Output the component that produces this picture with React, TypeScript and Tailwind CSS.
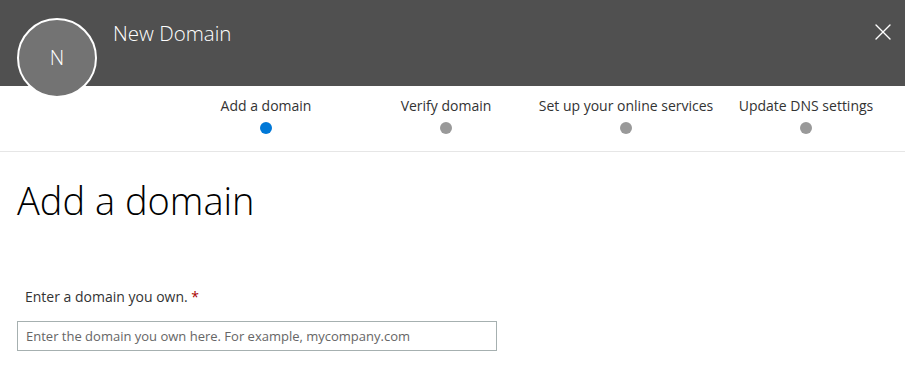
import { X } from "lucide-react";

const steps = [
  "Add a domain",
  "Verify domain",
  "Set up your online services",
  "Update DNS settings",
];

export default function App() {
  return (
    <div className="w-[905px] h-[365px] bg-white overflow-hidden font-['Open_Sans','Noto_Sans',sans-serif]">
      <div className="relative h-[86px] bg-[#505050] flex items-start">
        <div className="ml-[17px] mt-[18px] w-[80px] h-[80px] shrink-0 rounded-full bg-[#737373] border-2 border-white flex items-center justify-center text-white text-[20px] font-light z-10">
          N
        </div>
        <h1 className="ml-[16px] mt-[18px] text-white text-[20.5px] font-light">New Domain</h1>
        <button className="absolute right-[8px] top-[18px] text-white">
          <X className="w-[28px] h-[28px]" strokeWidth={1.2} />
        </button>
      </div>
      <div className="h-[66px] border-b border-[#e6e6e6] flex justify-end pr-[9px]">
        {steps.map((s, i) => (
          <div key={s} className="w-[180px] flex flex-col items-center pt-[10px]">
            <span className="text-[14px] text-[#333] whitespace-nowrap leading-[20px]">{s}</span>
            <span
              className={`mt-[6px] w-[12px] h-[12px] rounded-full ${
                i === 0 ? "bg-[#0078d7]" : "bg-[#999]"
              }`}
            />
          </div>
        ))}
      </div>
      <div className="px-[17px]">
        <h2 className="mt-[24px] text-[38px] font-light text-black leading-[48px]">Add a domain</h2>
        <label className="block mt-[62px] ml-[8px] text-[14px] text-[#333]">
          Enter a domain you own. <span className="text-[#a80000]">*</span>
        </label>
        <input
          className="mt-[14px] w-[480px] h-[30px] border border-[#a6b0b0] px-[8px] text-[13px] placeholder:text-[#666] outline-none"
          placeholder="Enter the domain you own here. For example, mycompany.com"
        />
      </div>
    </div>
  );
}
